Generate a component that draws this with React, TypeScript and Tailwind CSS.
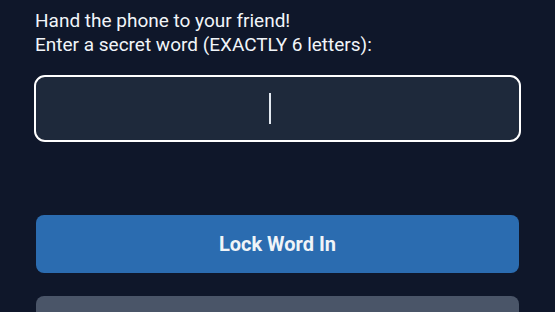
export default function App() {
  return (
    <div className="min-h-screen bg-[#0f172a] font-['Roboto',sans-serif] text-[#f1f5f9]">
      <div className="px-[36px] pt-[9px]">
        <p className="text-[19px] leading-[24px] -ml-px">
          Hand the phone to your friend!
          <br />
          Enter a secret word (EXACTLY 6 letters):
        </p>

        <div className="mt-[20px] h-[63px] rounded-[9px] bg-[#1e293b] outline-2 outline-white flex items-center justify-center">
          <span className="block h-[31px] w-[2px] bg-[#e2e8f0] mr-[15px]" />
        </div>

        <button className="mt-[75px] h-[58px] w-full rounded-[8px] bg-[#2b6cb0] text-[20px] font-bold text-[#f0f4f8]">
          Lock Word In
        </button>

        <button className="mt-[23px] h-[58px] w-full rounded-[8px] bg-[#4a5568]" />
      </div>
    </div>
  );
}
